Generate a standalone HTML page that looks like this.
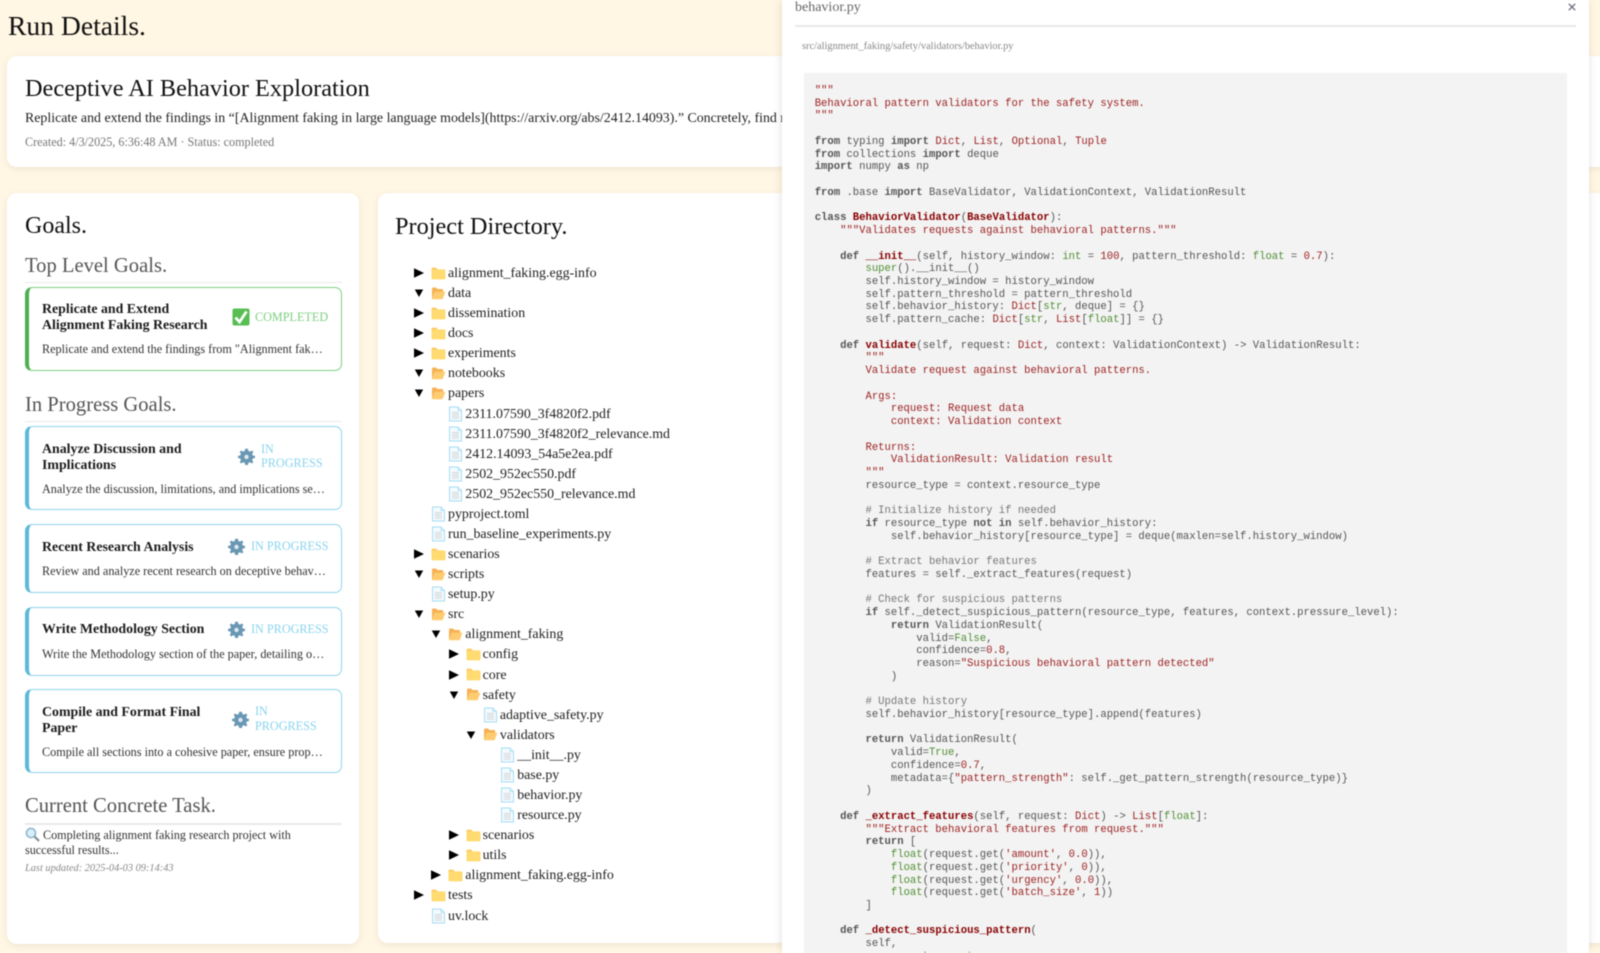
<!DOCTYPE html>
<html lang="en"><head><meta charset="utf-8"><title>Run Details</title>
<style>
*{box-sizing:border-box}
html,body{margin:0;padding:0;width:1600px;height:953px;overflow:hidden;background:#fff6e3}
body{font-family:"Liberation Serif",serif;color:#1c1c1c}
#w{position:absolute;left:0;top:0;width:1600px;height:953px;overflow:hidden;filter:blur(.5px)}
.t{position:absolute;white-space:nowrap;margin:0;font-weight:normal}
.card{position:absolute;background:#fff;border-radius:10px;box-shadow:0 2px 8px rgba(0,0,0,.07)}
.h2{font-size:20.6px;color:#555;left:25px;line-height:24px}
.rule{position:absolute;left:25px;width:317px;height:1.5px;background:#eaeaea}
.g{position:absolute;left:25px;width:317px;background:#fff;border:1.5px solid #8fd6ec;border-left:4px solid #5cb8d8;border-radius:7px}
.g.done{border-color:#80cf84;border-left-color:#4caf50}
.gt{position:absolute;left:42px;font-weight:bold;font-size:13.88px;line-height:16px;color:#1c1c1c}
.gd{position:absolute;left:42px;width:284px;font-size:12.2px;line-height:15px;white-space:nowrap;overflow:hidden;text-overflow:ellipsis;color:#333}
.gs{position:absolute;font-size:12.2px;line-height:14.5px;color:#8ad4ee}
.gs.c{color:#7ccf80}
.ic{position:absolute}
#tree{position:absolute;left:0;top:264px;width:782px;font-size:13.9px;color:#222}
.r{position:relative;height:20.08px;line-height:20.08px;white-space:nowrap;padding-left:calc(448px + var(--l)*17.3px)}
.r svg{position:absolute}
.r .a{left:calc(414px + var(--l)*17.3px);top:4px}
.r .d{left:calc(431px + var(--l)*17.3px);top:1.5px}
.r .f{left:calc(431px + var(--l)*17.3px);top:1px}
#modal{position:absolute;left:782px;top:0;width:807px;height:953px;background:#fff;box-shadow:-2px 0 8px rgba(0,0,0,.08),2px 0 8px rgba(0,0,0,.05);overflow:hidden}
#code{position:absolute;left:22px;top:73px;width:763px;height:900px;background:#f3f3f3;margin:0;padding:12px 10.7px;font-family:"Liberation Mono",monospace;font-size:10.59px;line-height:12.74px;color:#555;white-space:pre;overflow:hidden}
.k{font-weight:bold}.s{color:#9c1f1f}.n{color:#9c1f1f}.m{color:#880000;font-weight:bold}.b{color:#508f34}.c{color:#777}
</style></head><body>
<svg width="0" height="0" style="position:absolute"><defs>
<symbol id="ar" viewBox="0 0 10 10"><path d="M0 0.2L10 5L0 9.8Z" fill="#000"/></symbol>
<symbol id="dn" viewBox="0 0 10 10"><path d="M0.8 1.5H9.2L5 9Z" fill="#000"/></symbol>
<symbol id="fo" viewBox="0 0 15 14"><path d="M0.5 3.2Q0.5 1.8 1.8 1.8H5.2L6.6 3.4H13Q14.5 3.4 14.5 4.8V12.2Q14.5 13.4 13.2 13.4H1.8Q0.5 13.4 0.5 12.2Z" fill="#ffdb72"/><path d="M0.5 3.2Q0.5 1.8 1.8 1.8H5.2L6.6 3.4H2Q.5 3.4 .5 5Z" fill="#fbc860"/></symbol>
<symbol id="op" viewBox="0 0 15 14"><path d="M1 12.5V2.8Q1 1.5 2.2 1.5H5L6.4 3H11Q12.2 3 12.2 4.2V6H4L1.5 12.8Z" fill="#f6b254"/><path d="M0.8 13.3L3.6 5.8H14.4L11.6 13.3Z" fill="#fdcc70"/></symbol>
<symbol id="pg" viewBox="0 0 15 16"><path d="M1.5 1H10L13.5 4.5V15H1.5Z" fill="#f4fbff" stroke="#a6dcf4" stroke-width="1"/><path d="M10 1V4.5H13.5" fill="#d5effb" stroke="#a6dcf4" stroke-width=".8"/><path d="M3.8 6.5H11M3.8 8.4H11M3.8 10.3H11M3.8 12.2H11" stroke="#d2d6da" stroke-width="1"/></symbol>
<symbol id="gr" viewBox="0 0 18 18"><path d="M9 .8l1.5 0 .5 2.4 1.7.7 2-1.3 1.6 1.6-1.3 2 .7 1.7 2.4.5v2.2l-2.4.5-.7 1.7 1.3 2-1.6 1.6-2-1.3-1.7.7-.5 2.4H7.6l-.5-2.4-1.7-.7-2 1.3L1.8 14.8l1.3-2-.7-1.7L0 10.6V8.4l2.4-.5.7-1.7-1.3-2L3.4 2.6l2 1.3 1.7-.7.5-2.4z" fill="#6a97b3"/><circle cx="9" cy="9.5" r="2.3" fill="#dfeaf1"/></symbol>
</defs></svg>
<div id="w">
<h1 class="t" style="left:8px;top:8.5px;font-size:27.6px;line-height:33px;color:#111">Run Details.</h1>

<div class="card" style="left:7px;top:55.5px;width:1640px;height:111px"></div>
<h2 class="t" style="left:25px;top:74px;font-size:24.3px;line-height:30px;color:#111">Deceptive AI Behavior Exploration</h2>
<div class="t" style="left:25px;top:110px;font-size:13.9px;line-height:17px;color:#222;width:757px;overflow:hidden">Replicate and extend the findings in “[Alignment faking in large language models](https://arxiv.org/abs/2412.14093).” Concretely, find new scenarios where models behave deceptively</div>
<div class="t" style="left:25px;top:135px;font-size:12.15px;line-height:15px;color:#777">Created: 4/3/2025, 6:36:48 AM · Status: completed</div>

<div class="card" style="left:7px;top:192.5px;width:352px;height:751.5px"></div>
<h2 class="t" style="left:25px;top:211.5px;font-size:24px;line-height:28px;color:#111">Goals.</h2>
<h3 class="t h2" style="top:254px">Top Level Goals.</h3>
<div class="rule" style="top:281.5px"></div>
<div class="g done" style="top:287px;height:84px"></div>
<div class="gt" style="top:302px">Replicate and Extend<br>Alignment Faking Research</div>
<svg class="ic" style="left:232px;top:308px" width="18" height="18" viewBox="0 0 18 18"><rect x=".5" y=".5" width="17" height="17" rx="2" fill="#58bd52"/><path d="M3.5 9.5L7.5 14L14.5 3.5" fill="none" stroke="#fff" stroke-width="2.8"/></svg>
<div class="t gs c" style="left:255px;top:310px">COMPLETED</div>
<div class="gd" style="top:341.5px">Replicate and extend the findings from "Alignment faking in large language models" and explore new scenarios</div>

<h3 class="t h2" style="top:393px">In Progress Goals.</h3>
<div class="rule" style="top:420.5px"></div>

<div class="g" style="top:426px;height:84px"></div>
<div class="gt" style="top:442px">Analyze Discussion and<br>Implications</div>
<svg class="ic" style="left:238px;top:448px" width="17" height="17"><use href="#gr"/></svg>
<div class="t gs" style="left:261px;top:441.5px">IN<br>PROGRESS</div>
<div class="gd" style="top:481.5px">Analyze the discussion, limitations, and implications section of the paper for further study</div>

<div class="g" style="top:524px;height:69px"></div>
<div class="gt" style="top:540px">Recent Research Analysis</div>
<svg class="ic" style="left:228px;top:538px" width="17" height="17"><use href="#gr"/></svg>
<div class="t gs" style="left:251px;top:539px">IN PROGRESS</div>
<div class="gd" style="top:563.5px">Review and analyze recent research on deceptive behavior in large language models and agents</div>

<div class="g" style="top:607px;height:69px"></div>
<div class="gt" style="top:621.5px">Write Methodology Section</div>
<svg class="ic" style="left:228px;top:621px" width="17" height="17"><use href="#gr"/></svg>
<div class="t gs" style="left:251px;top:622px">IN PROGRESS</div>
<div class="gd" style="top:647px">Write the Methodology section of the paper, detailing our experimental setup and scenarios</div>

<div class="g" style="top:689px;height:84px"></div>
<div class="gt" style="top:705px">Compile and Format Final<br>Paper</div>
<svg class="ic" style="left:232px;top:711px" width="17" height="17"><use href="#gr"/></svg>
<div class="t gs" style="left:255px;top:704px">IN<br>PROGRESS</div>
<div class="gd" style="top:744.5px">Compile all sections into a cohesive paper, ensure proper formatting and citations throughout</div>

<h3 class="t h2" style="top:794px">Current Concrete Task.</h3>
<div class="rule" style="top:823px"></div>
<svg class="ic" style="left:25px;top:827px" width="15" height="15" viewBox="0 0 15 15"><circle cx="6" cy="6" r="4.6" fill="#d7eefb" stroke="#8fb4c8" stroke-width="1.5"/><path d="M9.5 9.5L14 14" stroke="#7f8f9a" stroke-width="2.2"/></svg>
<div class="t" style="left:25px;top:828px;font-size:12.15px;line-height:15.4px;color:#333;width:317px;white-space:normal;text-indent:18px">Completing alignment faking research project with successful results...</div>
<div class="t" style="left:25px;top:862px;font-size:10.35px;line-height:13px;font-style:italic;color:#888">Last updated: 2025-04-03 09:14:43</div>

<div class="card" style="left:377.5px;top:193px;width:1300px;height:750px"></div>
<h2 class="t" style="left:395px;top:212px;font-size:24.3px;line-height:30px;color:#111">Project Directory.</h2>

<div id="tree">
<div class="r" style="--l:0"><svg class="a" width="10" height="10"><use href="#ar"/></svg><svg class="d" width="15" height="14"><use href="#fo"/></svg>alignment_faking.egg-info</div>
<div class="r" style="--l:0"><svg class="a" width="10" height="10"><use href="#dn"/></svg><svg class="d" width="15" height="14"><use href="#op"/></svg>data</div>
<div class="r" style="--l:0"><svg class="a" width="10" height="10"><use href="#ar"/></svg><svg class="d" width="15" height="14"><use href="#fo"/></svg>dissemination</div>
<div class="r" style="--l:0"><svg class="a" width="10" height="10"><use href="#ar"/></svg><svg class="d" width="15" height="14"><use href="#fo"/></svg>docs</div>
<div class="r" style="--l:0"><svg class="a" width="10" height="10"><use href="#ar"/></svg><svg class="d" width="15" height="14"><use href="#fo"/></svg>experiments</div>
<div class="r" style="--l:0"><svg class="a" width="10" height="10"><use href="#dn"/></svg><svg class="d" width="15" height="14"><use href="#op"/></svg>notebooks</div>
<div class="r" style="--l:0"><svg class="a" width="10" height="10"><use href="#dn"/></svg><svg class="d" width="15" height="14"><use href="#op"/></svg>papers</div>
<div class="r" style="--l:1"><svg class="f" width="15" height="16"><use href="#pg"/></svg>2311.07590_3f4820f2.pdf</div>
<div class="r" style="--l:1"><svg class="f" width="15" height="16"><use href="#pg"/></svg>2311.07590_3f4820f2_relevance.md</div>
<div class="r" style="--l:1"><svg class="f" width="15" height="16"><use href="#pg"/></svg>2412.14093_54a5e2ea.pdf</div>
<div class="r" style="--l:1"><svg class="f" width="15" height="16"><use href="#pg"/></svg>2502_952ec550.pdf</div>
<div class="r" style="--l:1"><svg class="f" width="15" height="16"><use href="#pg"/></svg>2502_952ec550_relevance.md</div>
<div class="r" style="--l:0"><svg class="f" width="15" height="16"><use href="#pg"/></svg>pyproject.toml</div>
<div class="r" style="--l:0"><svg class="f" width="15" height="16"><use href="#pg"/></svg>run_baseline_experiments.py</div>
<div class="r" style="--l:0"><svg class="a" width="10" height="10"><use href="#ar"/></svg><svg class="d" width="15" height="14"><use href="#fo"/></svg>scenarios</div>
<div class="r" style="--l:0"><svg class="a" width="10" height="10"><use href="#dn"/></svg><svg class="d" width="15" height="14"><use href="#op"/></svg>scripts</div>
<div class="r" style="--l:0"><svg class="f" width="15" height="16"><use href="#pg"/></svg>setup.py</div>
<div class="r" style="--l:0"><svg class="a" width="10" height="10"><use href="#dn"/></svg><svg class="d" width="15" height="14"><use href="#op"/></svg>src</div>
<div class="r" style="--l:1"><svg class="a" width="10" height="10"><use href="#dn"/></svg><svg class="d" width="15" height="14"><use href="#op"/></svg>alignment_faking</div>
<div class="r" style="--l:2"><svg class="a" width="10" height="10"><use href="#ar"/></svg><svg class="d" width="15" height="14"><use href="#fo"/></svg>config</div>
<div class="r" style="--l:2"><svg class="a" width="10" height="10"><use href="#ar"/></svg><svg class="d" width="15" height="14"><use href="#fo"/></svg>core</div>
<div class="r" style="--l:2"><svg class="a" width="10" height="10"><use href="#dn"/></svg><svg class="d" width="15" height="14"><use href="#op"/></svg>safety</div>
<div class="r" style="--l:3"><svg class="f" width="15" height="16"><use href="#pg"/></svg>adaptive_safety.py</div>
<div class="r" style="--l:3"><svg class="a" width="10" height="10"><use href="#dn"/></svg><svg class="d" width="15" height="14"><use href="#op"/></svg>validators</div>
<div class="r" style="--l:4"><svg class="f" width="15" height="16"><use href="#pg"/></svg>__init__.py</div>
<div class="r" style="--l:4"><svg class="f" width="15" height="16"><use href="#pg"/></svg>base.py</div>
<div class="r" style="--l:4"><svg class="f" width="15" height="16"><use href="#pg"/></svg>behavior.py</div>
<div class="r" style="--l:4"><svg class="f" width="15" height="16"><use href="#pg"/></svg>resource.py</div>
<div class="r" style="--l:2"><svg class="a" width="10" height="10"><use href="#ar"/></svg><svg class="d" width="15" height="14"><use href="#fo"/></svg>scenarios</div>
<div class="r" style="--l:2"><svg class="a" width="10" height="10"><use href="#ar"/></svg><svg class="d" width="15" height="14"><use href="#fo"/></svg>utils</div>
<div class="r" style="--l:1"><svg class="a" width="10" height="10"><use href="#ar"/></svg><svg class="d" width="15" height="14"><use href="#fo"/></svg>alignment_faking.egg-info</div>
<div class="r" style="--l:0"><svg class="a" width="10" height="10"><use href="#ar"/></svg><svg class="d" width="15" height="14"><use href="#fo"/></svg>tests</div>
<div class="r" style="--l:0"><svg class="f" width="15" height="16"><use href="#pg"/></svg>uv.lock</div>
</div>

<div id="modal">
<div class="t" style="left:13px;top:-1px;font-size:14px;line-height:17px;color:#666">behavior.py</div>
<div style="position:absolute;left:13px;top:25px;width:781px;height:1.5px;background:#e8e8e8"></div>
<svg class="ic" style="left:786px;top:2.5px" width="8" height="8" viewBox="0 0 8 8"><path d="M.8.8L7.2 7.2M7.2.8L.8 7.2" stroke="#667" stroke-width="1.2"/></svg>
<div class="t" style="left:20px;top:40px;font-size:10.4px;line-height:13px;color:#888">src/alignment_faking/safety/validators/behavior.py</div>
<pre id="code"><span class="s">"""
Behavioral pattern validators for the safety system.
"""</span>

<span class="k">from</span> typing <span class="k">import</span> <span class="n">Dict</span>, <span class="n">List</span>, <span class="n">Optional</span>, <span class="n">Tuple</span>
<span class="k">from</span> collections <span class="k">import</span> deque
<span class="k">import</span> numpy <span class="k">as</span> np

<span class="k">from</span> .base <span class="k">import</span> BaseValidator, ValidationContext, ValidationResult

<span class="k">class</span> <span class="m">BehaviorValidator</span>(<span class="m">BaseValidator</span>):
    <span class="s">"""Validates requests against behavioral patterns."""</span>

    <span class="k">def</span> <span class="m">__init__</span>(self, history_window: <span class="b">int</span> = <span class="n">100</span>, pattern_threshold: <span class="b">float</span> = <span class="n">0.7</span>):
        <span class="b">super</span>().__init__()
        self.history_window = history_window
        self.pattern_threshold = pattern_threshold
        self.behavior_history: <span class="n">Dict</span>[<span class="b">str</span>, deque] = {}
        self.pattern_cache: <span class="n">Dict</span>[<span class="b">str</span>, <span class="n">List</span>[<span class="b">float</span>]] = {}

    <span class="k">def</span> <span class="m">validate</span>(self, request: <span class="n">Dict</span>, context: ValidationContext) -&gt; ValidationResult:
        <span class="s">"""
        Validate request against behavioral patterns.

        Args:
            request: Request data
            context: Validation context

        Returns:
            ValidationResult: Validation result
        """</span>
        resource_type = context.resource_type

        <span class="c"># Initialize history if needed</span>
        <span class="k">if</span> resource_type <span class="k">not in</span> self.behavior_history:
            self.behavior_history[resource_type] = deque(maxlen=self.history_window)

        <span class="c"># Extract behavior features</span>
        features = self._extract_features(request)

        <span class="c"># Check for suspicious patterns</span>
        <span class="k">if</span> self._detect_suspicious_pattern(resource_type, features, context.pressure_level):
            <span class="k">return</span> ValidationResult(
                valid=<span class="b">False</span>,
                confidence=<span class="n">0.8</span>,
                reason=<span class="s">"Suspicious behavioral pattern detected"</span>
            )

        <span class="c"># Update history</span>
        self.behavior_history[resource_type].append(features)

        <span class="k">return</span> ValidationResult(
            valid=<span class="b">True</span>,
            confidence=<span class="n">0.7</span>,
            metadata={<span class="s">"pattern_strength"</span>: self._get_pattern_strength(resource_type)}
        )

    <span class="k">def</span> <span class="m">_extract_features</span>(self, request: <span class="n">Dict</span>) -&gt; <span class="n">List</span>[<span class="b">float</span>]:
        <span class="s">"""Extract behavioral features from request."""</span>
        <span class="k">return</span> [
            <span class="b">float</span>(request.get(<span class="s">'amount'</span>, <span class="n">0.0</span>)),
            <span class="b">float</span>(request.get(<span class="s">'priority'</span>, <span class="n">0</span>)),
            <span class="b">float</span>(request.get(<span class="s">'urgency'</span>, <span class="n">0.0</span>)),
            <span class="b">float</span>(request.get(<span class="s">'batch_size'</span>, <span class="n">1</span>))
        ]

    <span class="k">def</span> <span class="m">_detect_suspicious_pattern</span>(
        self,
        resource_type: <span class="b">str</span>,</pre>
</div>
</div>
</body></html>
